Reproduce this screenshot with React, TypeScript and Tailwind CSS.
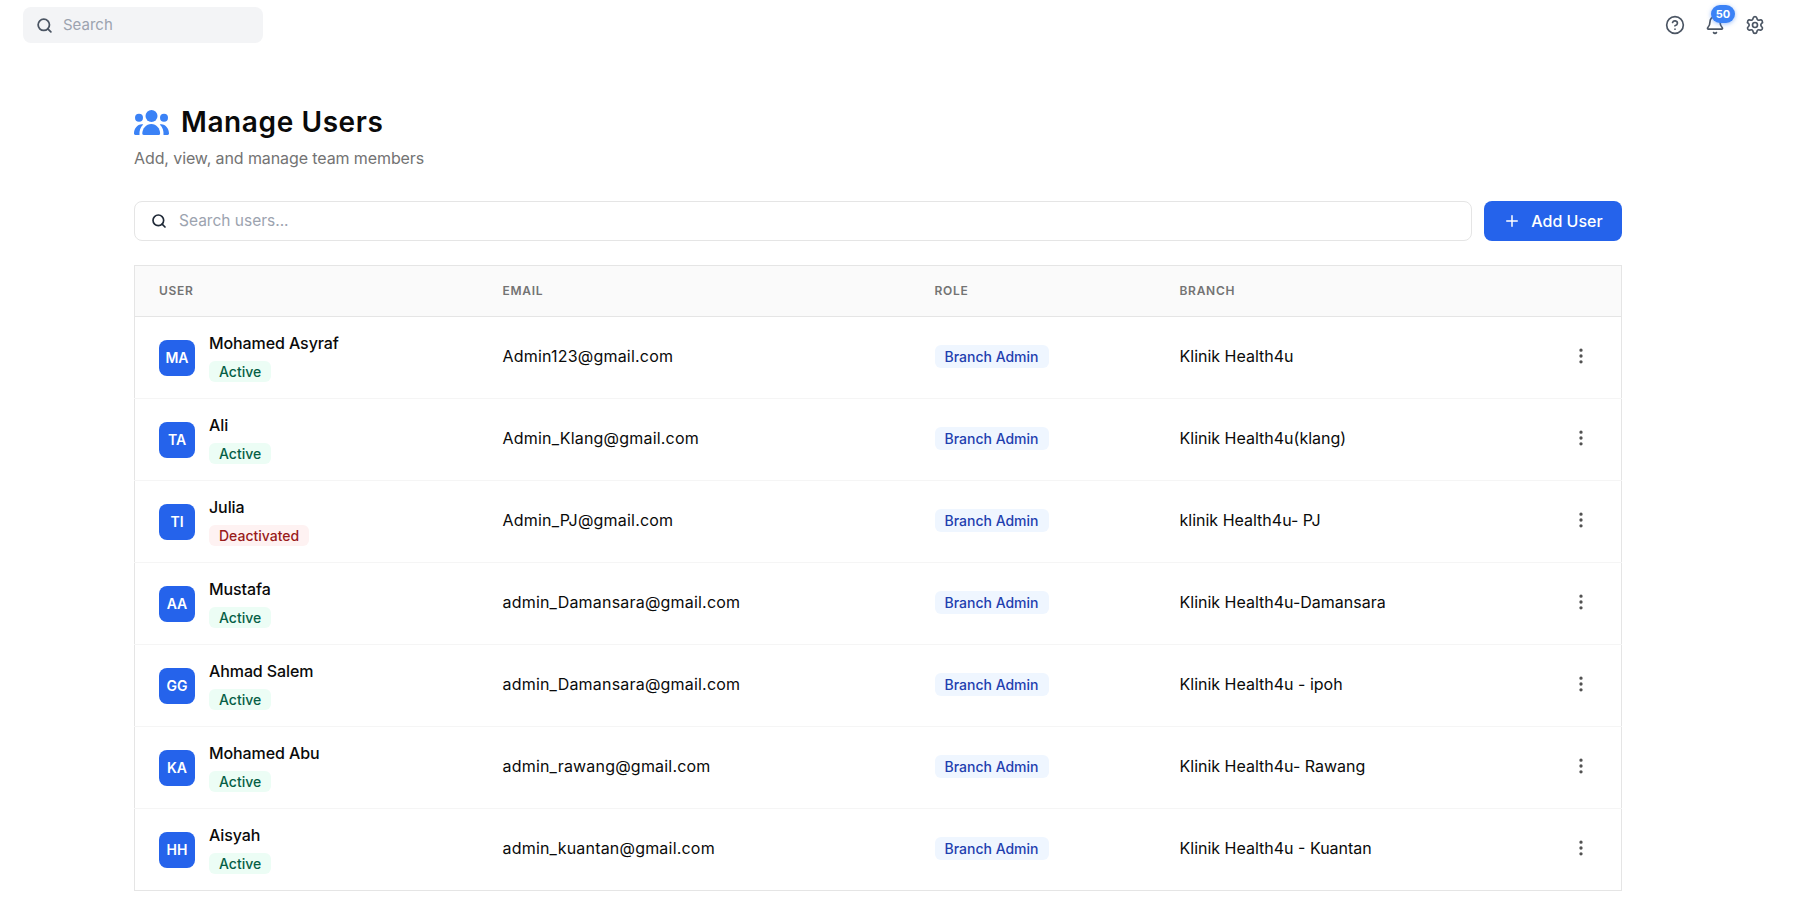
import { Search, CircleHelp, Bell, Settings, Plus, EllipsisVertical } from "lucide-react";

const users = [
  { initials: "MA", name: "Mohamed Asyraf", active: true, email: "Admin123@gmail.com", branch: "Klinik Health4u" },
  { initials: "TA", name: "Ali", active: true, email: "Admin_Klang@gmail.com", branch: "Klinik Health4u(klang)" },
  { initials: "TI", name: "Julia", active: false, email: "Admin_PJ@gmail.com", branch: "klinik Health4u- PJ" },
  { initials: "AA", name: "Mustafa", active: true, email: "admin_Damansara@gmail.com", branch: "Klinik Health4u-Damansara" },
  { initials: "GG", name: "Ahmad Salem", active: true, email: "admin_Damansara@gmail.com", branch: "Klinik Health4u - ipoh" },
  { initials: "KA", name: "Mohamed Abu", active: true, email: "admin_rawang@gmail.com", branch: "Klinik Health4u- Rawang" },
  { initials: "HH", name: "Aisyah", active: true, email: "admin_kuantan@gmail.com", branch: "Klinik Health4u - Kuantan" },
];

function TeamIcon() {
  return (
    <svg viewBox="0 0 35 25" className="h-[25px] w-[35px] fill-[#3b82f6]">
      <circle cx="17.5" cy="6" r="6" />
      <circle cx="5" cy="7.7" r="4" />
      <circle cx="30" cy="7.7" r="4" />
      <path d="M17.3 14c-5.2 0-9 4.6-9 9.6 0 1 .6 1.4 1.4 1.4h15.2c.8 0 1.2-.5 1.2-1.4 0-5-3.6-9.6-8.8-9.6Z" />
      <path d="M7.8 14.2C3.2 14.4 0 18.6 0 23.6 0 24.5.5 25 1.4 25h4.1c-.3-4.3.8-7.7 3.7-10.6-.4-.1-.9-.2-1.4-.2Z" />
      <path d="M27.2 14.2C31.8 14.4 35 18.6 35 23.6c0 .9-.5 1.4-1.4 1.4h-4.1c.3-4.3-.8-7.7-3.7-10.6.4-.1.9-.2 1.4-.2Z" />
    </svg>
  );
}

export default function App() {
  return (
    <div className="min-h-screen bg-white font-['Inter',sans-serif] text-[#0a0a0a]">
      {/* Top bar */}
      <header className="flex h-[50px] items-start justify-between pl-[23px] pr-7 pt-[7px]">
        <div className="flex h-9 w-60 items-center gap-2.5 rounded-lg bg-[#f3f4f6] px-[13px]">
          <Search strokeWidth={2.5} className="h-[17px] w-[17px] text-[#4b5563]" />
          <span className="text-[15px] text-[#9ca3af]">Search</span>
        </div>
        <div className="flex items-center gap-5 pt-2">
          <CircleHelp className="h-5 w-5 text-[#4b5563]" />
          <div className="relative">
            <Bell className="h-5 w-5 text-[#4b5563]" />
            <span className="absolute -top-[10px] left-[6px] flex h-[18px] w-6 items-center justify-center rounded-full bg-[#3b82f6] text-[11px] font-bold text-white shadow-[0_1px_4px_rgba(59,130,246,0.5)]">
              50
            </span>
          </div>
          <Settings className="h-5 w-5 text-[#4b5563]" />
        </div>
      </header>

      <main className="pl-[134px] pr-[171px] pt-[54px]">
        {/* Title */}
        <div className="flex items-center gap-3">
          <TeamIcon />
          <h1 className="text-[28px] font-semibold leading-9 tracking-[0.6px] text-[#0a0a0a]">Manage Users</h1>
        </div>
        <p className="mt-1.5 text-base leading-6 tracking-[-0.1px] text-[#737373]">Add, view, and manage team members</p>

        {/* Search + add */}
        <div className="mt-[31px] flex gap-3">
          <div className="flex h-10 flex-1 items-center gap-3 rounded-lg border border-[#e5e5e5] px-4">
            <Search strokeWidth={2.5} className="h-4 w-4 text-[#1f2937]" />
            <span className="text-[15.5px] leading-[22px] text-[#9ca3af]">Search users...</span>
          </div>
          <button className="flex h-10 w-[138px] items-center justify-center gap-2.5 rounded-lg bg-[#2563eb] pb-px text-base font-medium text-white">
            <Plus className="h-[18px] w-[18px]" />
            Add User
          </button>
        </div>

        {/* Table */}
        <table className="mt-6 w-full table-fixed border border-[#e5e5e5] text-left">
          <colgroup>
            <col className="w-[344px]" />
            <col className="w-[432px]" />
            <col className="w-[245px]" />
            <col />
            <col className="w-[82px]" />
          </colgroup>
          <thead>
            <tr className="h-[51px] border-b border-[#e5e5e5] bg-[#fafafa] text-xs uppercase tracking-[0.7px] text-[#737373]">
              <th className="pl-6 font-semibold">User</th>
              <th className="pl-6 font-semibold">Email</th>
              <th className="pl-6 font-semibold">Role</th>
              <th className="pl-6 font-semibold">Branch</th>
              <th />
            </tr>
          </thead>
          <tbody>
            {users.map((u) => (
              <tr key={u.initials} className="h-[82px] border-b border-[#f5f5f5] text-base last:border-b-0">
                <td className="pl-6">
                  <div className="flex items-center gap-3.5">
                    <div className="flex h-9 w-9 items-center justify-center rounded-lg bg-[#2563eb] text-sm font-semibold text-white">
                      {u.initials}
                    </div>
                    <div className="flex flex-col items-start gap-2">
                      <span className="text-base font-medium leading-5 tracking-[-0.1px]">{u.name}</span>
                      <span
                        className={
                          u.active
                            ? "rounded-md bg-[#ecfdf5] px-2.5 py-0.5 text-sm font-medium leading-[17px] text-[#065f46]"
                            : "rounded-md bg-[#fef2f2] px-2.5 py-0.5 text-sm font-medium leading-[17px] text-[#991b1b]"
                        }
                      >
                        {u.active ? "Active" : "Deactivated"}
                      </span>
                    </div>
                  </div>
                </td>
                <td className="pb-[3px] pl-6 tracking-[0.2px]">{u.email}</td>
                <td className="pb-[3px] pl-6">
                  <span className="rounded-md bg-[#eff6ff] px-2.5 py-[3px] text-sm font-medium text-[#1e40af]">
                    Branch Admin
                  </span>
                </td>
                <td className="pb-[3px] pl-6">{u.branch}</td>
                <td className="pb-[3px]">
                  <EllipsisVertical className="ml-[31px] h-5 w-5 text-[#525252]" />
                </td>
              </tr>
            ))}
          </tbody>
        </table>
      </main>
    </div>
  );
}
